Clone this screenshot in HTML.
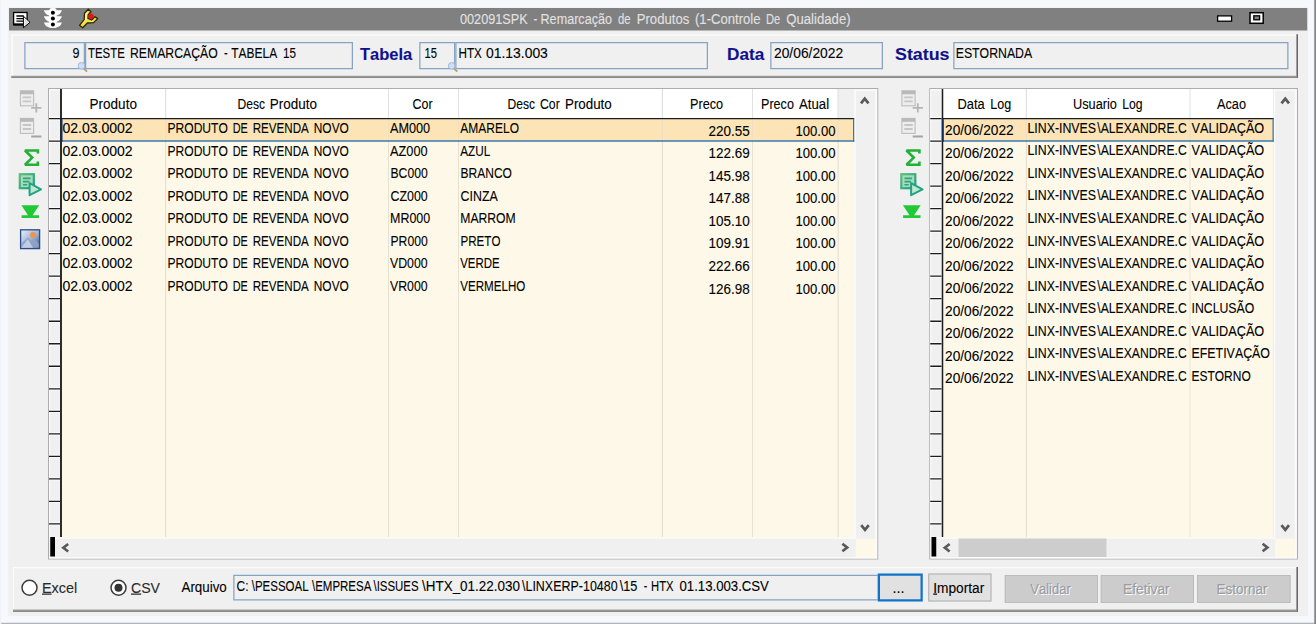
<!DOCTYPE html>
<html lang="pt-BR"><head><meta charset="utf-8"><title>002091SPK - Remarcação de Produtos</title>
<style>
html,body{margin:0;padding:0;width:1316px;height:624px;overflow:hidden;background:#f6f8fc}
#frame{position:absolute;left:0;top:0;width:5264px;height:2496px;transform:scale(.25);transform-origin:0 0;
 font-family:"Liberation Sans",sans-serif;background:#f6f8fc;overflow:hidden}
#frame div,#frame span,#frame svg,.grp{position:absolute;display:block;box-sizing:border-box}
.grp{left:0;top:0;width:0;height:0}
.t{white-space:pre;font-kerning:none;transform-origin:0 0;-webkit-text-stroke:.4px}
.ul1::first-letter{text-decoration:underline}
</style></head><body>
<div id="frame">
<div style="left:33px;top:30px;width:5199px;height:2434px;background:#f0f0f0"></div>
<div style="left:0px;top:2491px;width:5264px;height:5px;background:#b0b3b8"></div>
<div style="left:5257px;top:0px;width:7px;height:2496px;background:#838588"></div>
<div style="left:0px;top:0px;width:5px;height:2496px;background:#eff2f6"></div>
<header class="grp" id="titlebar">
<div class="titlebar" style="left:36px;top:32px;width:5193px;height:90px;background:#808080"></div>
<span class="t" style="left:1840.0px;top:42.6px;font-size:55.2px;line-height:66.2px;transform:scaleX(0.9180);color:#e2e2e2;">002091SPK</span>
<span class="t" style="left:2134.4px;top:42.6px;font-size:55.2px;line-height:66.2px;transform:scaleX(0.8216);color:#e2e2e2;">-</span>
<span class="t" style="left:2162.4px;top:42.6px;font-size:55.2px;line-height:66.2px;transform:scaleX(0.9143);color:#e2e2e2;">Remarcação</span>
<span class="t" style="left:2472.0px;top:42.6px;font-size:55.2px;line-height:66.2px;transform:scaleX(0.8195);color:#e2e2e2;">de</span>
<span class="t" style="left:2546.8px;top:42.6px;font-size:55.2px;line-height:66.2px;transform:scaleX(0.9510);color:#e2e2e2;">Produtos</span>
<span class="t" style="left:2779.6px;top:42.6px;font-size:55.2px;line-height:66.2px;transform:scaleX(0.9484);color:#e2e2e2;">(1-Controle</span>
<span class="t" style="left:3063.6px;top:42.6px;font-size:55.2px;line-height:66.2px;transform:scaleX(0.8085);color:#e2e2e2;">De</span>
<span class="t" style="left:3145.2px;top:42.6px;font-size:55.2px;line-height:66.2px;transform:scaleX(0.9532);color:#e2e2e2;">Qualidade)</span>
<svg class="ic" style="left:4856px;top:36px;width:224px;height:80px" viewBox="1214 9 56 20"><rect x="1217.6" y="15.9" width="14" height="5.3" fill="#fff" stroke="#000" stroke-width="1.3"/><rect x="1250" y="12.7" width="13.2" height="10.6" fill="#fff" stroke="#000" stroke-width="1.5"/><rect x="1253.8" y="15.8" width="5.8" height="4" fill="#808080" stroke="#000" stroke-width="1.3"/></svg>
<svg class="ic" style="left:36px;top:28px;width:384px;height:96px" viewBox="9 7 96 24"><rect x="13.6" y="12.5" width="13.5" height="12" fill="#fff" stroke="#000" stroke-width="1.3"/><rect x="13.2" y="23.4" width="12" height="2.2" fill="#000"/><path d="M16.4 16h7.4M16.4 18.6h7.4M16.4 21.2h7.4" stroke="#000" stroke-width="1.3"/><path d="M23.4 16.2 L30 22.3 L23.4 27.7 Z" fill="#fff" stroke="#000" stroke-width="1" stroke-linejoin="round"/><path d="M24.6 18.6 L28.6 22.3 L24.6 25.6 Z" fill="#dcdcdc"/><rect x="49.2" y="8.1" width="7.4" height="19.8" rx="2.6" fill="#fff"/><path d="M50 10.2H43.9Q45.2 14.8 50 15.8ZM50 16.3H43.9Q45.2 20.9 50 21.9ZM50 22.4H43.9Q45.4 27 51 27.9Z" fill="#fff"/><path d="M55.8 10.2H61.9Q60.6 14.8 55.8 15.8ZM55.8 16.3H61.9Q60.6 20.9 55.8 21.9ZM55.8 22.4H61.9Q60.4 27 54.8 27.9Z" fill="#fff"/><circle cx="52.9" cy="12.7" r="2" fill="#000"/><circle cx="52.9" cy="18.5" r="2" fill="#000"/><circle cx="52.9" cy="24.4" r="2" fill="#000"/><path d="M79.5 25.3 L84.2 19.6 L84.4 13.4 L88.3 9.3 L91 11.8 L88.2 14.8 L88 18.4 L91.5 20 L95 16.7 L97.7 18.6 L93.6 22.6 L87.4 23 L82.7 27.7 Z" fill="#f3df36" stroke="#2a2400" stroke-width="1.3" stroke-linejoin="round"/><path d="M85.6 14 L88 11.4 L86.8 15 L86.6 19.6 L82 24.6 L85.2 20 Z" fill="#fffbc4"/><path d="M88.6 20.4 L93 21.2 L95.2 18.8 L92 21.9 Z" fill="#fffbc4"/><circle cx="91" cy="16.3" r="2.7" fill="#e8141c"/></svg>
</header>
<section class="grp" id="cabecalho">
<div class="panel" style="left:45px;top:137px;width:5147px;height:174px;background:#f0f0f0"></div>
<div style="left:45px;top:137px;width:5147px;height:7px;background:#f9f9f9"></div>
<div style="left:45px;top:137px;width:7px;height:174px;background:#f9f9f9"></div>
<div style="left:45px;top:303px;width:5147px;height:3px;background:#a2a2a2"></div>
<div style="left:45px;top:306px;width:5147px;height:5px;background:#676767"></div>
<div style="left:5184px;top:137px;width:3px;height:174px;background:#a2a2a2"></div>
<div style="left:5187px;top:137px;width:5px;height:174px;background:#676767"></div>
<div class="field" style="left:97px;top:168px;width:243px;height:109px;background:#f0f0f0;border:5px solid #86a3c2"></div>
<div class="field" style="left:340px;top:168px;width:1072px;height:109px;background:#f0f0f0;border:5px solid #86a3c2"></div>
<div class="field" style="left:1677px;top:168px;width:144px;height:109px;background:#f0f0f0;border:5px solid #86a3c2"></div>
<div class="field" style="left:1821px;top:168px;width:1011px;height:109px;background:#f0f0f0;border:5px solid #86a3c2"></div>
<div class="field" style="left:3081px;top:168px;width:451px;height:109px;background:#f0f0f0;border:5px solid #86a3c2"></div>
<div class="field" style="left:3813px;top:168px;width:1341px;height:109px;background:#f0f0f0;border:5px solid #86a3c2"></div>
<span class="t" style="left:289.6px;top:179.4px;font-size:55.2px;line-height:66.2px;transform:scaleX(0.9106);color:#000;">9</span>
<span class="t" style="left:352.4px;top:179.4px;font-size:55.2px;line-height:66.2px;transform:scaleX(0.8292);color:#000;">TESTE</span>
<span class="t" style="left:520.0px;top:179.4px;font-size:55.2px;line-height:66.2px;transform:scaleX(0.8869);color:#000;">REMARCAÇÃO</span>
<span class="t" style="left:896.4px;top:179.4px;font-size:55.2px;line-height:66.2px;transform:scaleX(0.8000);color:#000;">-</span>
<span class="t" style="left:924.8px;top:179.4px;font-size:55.2px;line-height:66.2px;transform:scaleX(0.8684);color:#000;">TABELA</span>
<span class="t" style="left:1132.0px;top:179.4px;font-size:55.2px;line-height:66.2px;transform:scaleX(0.8455);color:#000;">15</span>
<span class="t" style="left:1698.4px;top:179.4px;font-size:55.2px;line-height:66.2px;transform:scaleX(0.8130);color:#000;">15</span>
<span class="t" style="left:1834.0px;top:179.4px;font-size:55.2px;line-height:66.2px;transform:scaleX(0.8471);color:#000;">HTX</span>
<span class="t" style="left:1944.4px;top:179.4px;font-size:55.2px;line-height:66.2px;transform:scaleX(1.0075);color:#000;">01.13.003</span>
<span class="t" style="left:3096.4px;top:179.4px;font-size:55.2px;line-height:66.2px;transform:scaleX(1.0011);color:#000;">20/06/2022</span>
<span class="t" style="left:3823.2px;top:179.4px;font-size:55.2px;line-height:66.2px;transform:scaleX(0.8893);color:#000;">ESTORNADA</span>
<span class="t" style="left:1440.4px;top:177.5px;font-size:65.2px;line-height:78.2px;transform:scaleX(1.0106);color:#10108c;font-weight:bold;">Tabela</span>
<span class="t" style="left:2907.6px;top:177.5px;font-size:65.2px;line-height:78.2px;transform:scaleX(1.0535);color:#10108c;font-weight:bold;">Data</span>
<span class="t" style="left:3579.6px;top:177.5px;font-size:65.2px;line-height:78.2px;transform:scaleX(1.0927);color:#10108c;font-weight:bold;">Status</span>
<svg class="ic" style="left:309px;top:245px;width:48px;height:48px" viewBox="0 0 12 12"><path d="M5.6 6.4 L9.8 10.4" stroke="#b8a070" stroke-width="2"/><circle cx="4.2" cy="4.6" r="3.3" fill="#cfe0f6" stroke="#9db8dc" stroke-width="1"/></svg>
<svg class="ic" style="left:1790px;top:245px;width:48px;height:48px" viewBox="0 0 12 12"><path d="M5.6 6.4 L9.8 10.4" stroke="#b8a070" stroke-width="2"/><circle cx="4.2" cy="4.6" r="3.3" fill="#cfe0f6" stroke="#9db8dc" stroke-width="1"/></svg>
</section>
<section class="grp" id="grid-produtos">
<div class="grid" style="left:192px;top:352px;width:3321px;height:1886px;background:#f0f0f0;border:4px solid #adadaf"></div>
<div style="left:248px;top:474px;width:3169px;height:1675px;background:#fef8e9"></div>
<div style="left:248px;top:356px;width:3105px;height:118px;background:#fff"></div>
<div style="left:248px;top:477px;width:3169px;height:86px;background:#fce4b6"></div>
<div style="left:660px;top:356px;width:5px;height:118px;background:#e2e2e2"></div>
<div style="left:660px;top:474px;width:5px;height:1675px;background:#e6e1d2"></div>
<div style="left:660px;top:477px;width:5px;height:86px;background:#f1dfc2"></div>
<div style="left:1552px;top:356px;width:4px;height:118px;background:#e2e2e2"></div>
<div style="left:1552px;top:474px;width:4px;height:1675px;background:#e6e1d2"></div>
<div style="left:1552px;top:477px;width:4px;height:86px;background:#f1dfc2"></div>
<div style="left:1832px;top:356px;width:4px;height:118px;background:#e2e2e2"></div>
<div style="left:1832px;top:474px;width:4px;height:1675px;background:#e6e1d2"></div>
<div style="left:1832px;top:477px;width:4px;height:86px;background:#f1dfc2"></div>
<div style="left:2647px;top:356px;width:5px;height:118px;background:#e2e2e2"></div>
<div style="left:2647px;top:474px;width:5px;height:1675px;background:#e6e1d2"></div>
<div style="left:2647px;top:477px;width:5px;height:86px;background:#f1dfc2"></div>
<div style="left:3008px;top:356px;width:4px;height:118px;background:#e2e2e2"></div>
<div style="left:3008px;top:474px;width:4px;height:1675px;background:#e6e1d2"></div>
<div style="left:3008px;top:477px;width:4px;height:86px;background:#f1dfc2"></div>
<div style="left:3350px;top:356px;width:5px;height:118px;background:#e2e2e2"></div>
<div style="left:3350px;top:474px;width:5px;height:1675px;background:#e6e1d2"></div>
<div style="left:3350px;top:477px;width:5px;height:86px;background:#f1dfc2"></div>
<div style="left:3417px;top:356px;width:92px;height:1793px;background:#f0f0f0"></div>
<div style="left:3417px;top:357px;width:6px;height:1792px;background:#fbfbfb"></div>
<div style="left:3500px;top:357px;width:8px;height:1876px;background:#fafafa"></div>
<div style="left:3417px;top:358px;width:91px;height:6px;background:#fafafa"></div>
<div style="left:196px;top:356px;width:45px;height:1793px;background:#f0f0f0"></div>
<div style="left:196px;top:356px;width:5px;height:1793px;background:#fafafa"></div>
<div style="left:196px;top:356px;width:45px;height:6px;background:#fafafa"></div>
<div style="left:196px;top:467px;width:44px;height:14px;background:#fafafa"></div>
<div style="left:196px;top:472px;width:45px;height:5px;background:#1c1c1c"></div>
<div style="left:196px;top:557px;width:44px;height:14px;background:#fafafa"></div>
<div style="left:196px;top:562px;width:45px;height:5px;background:#1c1c1c"></div>
<div style="left:196px;top:648px;width:44px;height:13px;background:#fafafa"></div>
<div style="left:196px;top:652px;width:45px;height:5px;background:#1c1c1c"></div>
<div style="left:196px;top:738px;width:44px;height:13px;background:#fafafa"></div>
<div style="left:196px;top:742px;width:45px;height:5px;background:#1c1c1c"></div>
<div style="left:196px;top:828px;width:44px;height:13px;background:#fafafa"></div>
<div style="left:196px;top:832px;width:45px;height:5px;background:#1c1c1c"></div>
<div style="left:196px;top:918px;width:44px;height:13px;background:#fafafa"></div>
<div style="left:196px;top:922px;width:45px;height:5px;background:#1c1c1c"></div>
<div style="left:196px;top:1008px;width:44px;height:13px;background:#fafafa"></div>
<div style="left:196px;top:1012px;width:45px;height:5px;background:#1c1c1c"></div>
<div style="left:196px;top:1098px;width:44px;height:14px;background:#fafafa"></div>
<div style="left:196px;top:1102px;width:45px;height:5px;background:#1c1c1c"></div>
<div style="left:196px;top:1188px;width:44px;height:14px;background:#fafafa"></div>
<div style="left:196px;top:1192px;width:45px;height:5px;background:#1c1c1c"></div>
<div style="left:196px;top:1278px;width:44px;height:14px;background:#fafafa"></div>
<div style="left:196px;top:1282px;width:45px;height:6px;background:#1c1c1c"></div>
<div style="left:196px;top:1368px;width:44px;height:14px;background:#fafafa"></div>
<div style="left:196px;top:1372px;width:45px;height:6px;background:#1c1c1c"></div>
<div style="left:196px;top:1458px;width:44px;height:14px;background:#fafafa"></div>
<div style="left:196px;top:1462px;width:45px;height:6px;background:#1c1c1c"></div>
<div style="left:196px;top:1548px;width:44px;height:14px;background:#fafafa"></div>
<div style="left:196px;top:1553px;width:45px;height:5px;background:#1c1c1c"></div>
<div style="left:196px;top:1638px;width:44px;height:14px;background:#fafafa"></div>
<div style="left:196px;top:1643px;width:45px;height:5px;background:#1c1c1c"></div>
<div style="left:196px;top:1729px;width:44px;height:13px;background:#fafafa"></div>
<div style="left:196px;top:1733px;width:45px;height:5px;background:#1c1c1c"></div>
<div style="left:196px;top:1819px;width:44px;height:13px;background:#fafafa"></div>
<div style="left:196px;top:1823px;width:45px;height:5px;background:#1c1c1c"></div>
<div style="left:196px;top:1909px;width:44px;height:13px;background:#fafafa"></div>
<div style="left:196px;top:1913px;width:45px;height:5px;background:#1c1c1c"></div>
<div style="left:196px;top:1999px;width:44px;height:13px;background:#fafafa"></div>
<div style="left:196px;top:2003px;width:45px;height:5px;background:#1c1c1c"></div>
<div style="left:196px;top:2089px;width:44px;height:13px;background:#fafafa"></div>
<div style="left:196px;top:2093px;width:45px;height:5px;background:#1c1c1c"></div>
<div style="left:240px;top:356px;width:8px;height:1793px;background:#2e2d2a"></div>
<div style="left:240px;top:472px;width:3177px;height:5px;background:#1c1c1c"></div>
<div style="left:246px;top:561px;width:3171px;height:6px;background:#3a78a8"></div>
<div style="left:3412px;top:474px;width:5px;height:93px;background:#3a78a8"></div>
<div style="left:242px;top:477px;width:8px;height:90px;background:#0c2c5e"></div>
<div style="left:196px;top:2149px;width:3313px;height:85px;background:#f0f0f0"></div>
<div style="left:3423px;top:2155px;width:77px;height:73px;background:#fef8e9"></div>
<div style="left:196px;top:2149px;width:3227px;height:6px;background:#fbfbfb"></div>
<div style="left:196px;top:2228px;width:3312px;height:5px;background:#fafafa"></div>
<div style="left:3500px;top:2149px;width:8px;height:84px;background:#fafafa"></div>
<div style="left:201px;top:2148px;width:19px;height:78px;background:#000"></div>
<svg class="ic" style="left:3435px;top:380px;width:48px;height:48px" viewBox="-6 -6 12 12"><path d="M-3.75 2.4 L0 -2.4 L3.75 2.4" fill="none" stroke="#5a5a5a" stroke-width="2.7"/></svg>
<svg class="ic" style="left:3436px;top:2086px;width:48px;height:48px" viewBox="-6 -6 12 12"><path d="M-3.75 -2.4 L0 2.4 L3.75 -2.4" fill="none" stroke="#5a5a5a" stroke-width="2.7"/></svg>
<svg class="ic" style="left:239px;top:2167px;width:48px;height:48px" viewBox="-6 -6 12 12"><path d="M2.4 -3.75 L-2.4 0 L2.4 3.75" fill="none" stroke="#5a5a5a" stroke-width="2.7"/></svg>
<svg class="ic" style="left:3355px;top:2166px;width:48px;height:48px" viewBox="-6 -6 12 12"><path d="M-2.4 -3.75 L2.4 0 L-2.4 3.75" fill="none" stroke="#5a5a5a" stroke-width="2.7"/></svg>
<span class="t" style="left:358.0px;top:383.0px;font-size:55.2px;line-height:66.2px;transform:scaleX(0.9819);color:#000;">Produto</span>
<span class="t" style="left:950.4px;top:383.0px;font-size:55.2px;line-height:66.2px;transform:scaleX(0.8762);color:#000;">Desc</span>
<span class="t" style="left:1079.2px;top:383.0px;font-size:55.2px;line-height:66.2px;transform:scaleX(0.9757);color:#000;">Produto</span>
<span class="t" style="left:1650.4px;top:383.0px;font-size:55.2px;line-height:66.2px;transform:scaleX(0.9034);color:#000;">Cor</span>
<span class="t" style="left:2030.0px;top:383.0px;font-size:55.2px;line-height:66.2px;transform:scaleX(0.8762);color:#000;">Desc</span>
<span class="t" style="left:2160.4px;top:383.0px;font-size:55.2px;line-height:66.2px;transform:scaleX(0.8899);color:#000;">Cor</span>
<span class="t" style="left:2259.6px;top:383.0px;font-size:55.2px;line-height:66.2px;transform:scaleX(0.9674);color:#000;">Produto</span>
<span class="t" style="left:2760.0px;top:383.0px;font-size:55.2px;line-height:66.2px;transform:scaleX(0.9179);color:#000;">Preco</span>
<span class="t" style="left:3044.4px;top:383.0px;font-size:55.2px;line-height:66.2px;transform:scaleX(0.9123);color:#000;">Preco</span>
<span class="t" style="left:3196.4px;top:383.0px;font-size:55.2px;line-height:66.2px;transform:scaleX(0.9587);color:#000;">Atual</span>
<span class="t" style="left:249.6px;top:479.8px;font-size:55.2px;line-height:66.2px;transform:scaleX(1.0141);color:#000;">02.03.0002</span>
<span class="t" style="left:670.0px;top:479.8px;font-size:55.2px;line-height:66.2px;transform:scaleX(0.8748);color:#000;">PRODUTO</span>
<span class="t" style="left:930.8px;top:479.8px;font-size:55.2px;line-height:66.2px;transform:scaleX(0.7870);color:#000;">DE</span>
<span class="t" style="left:1011.2px;top:479.8px;font-size:55.2px;line-height:66.2px;transform:scaleX(0.8390);color:#000;">REVENDA</span>
<span class="t" style="left:1255.2px;top:479.8px;font-size:55.2px;line-height:66.2px;transform:scaleX(0.8651);color:#000;">NOVO</span>
<span class="t" style="left:1560.0px;top:479.8px;font-size:55.2px;line-height:66.2px;transform:scaleX(0.9189);color:#000;">AM000</span>
<span class="t" style="left:1841.2px;top:479.8px;font-size:55.2px;line-height:66.2px;transform:scaleX(0.8703);color:#000;">AMARELO</span>
<span class="t" style="left:2834.0px;top:490.6px;font-size:55.2px;line-height:66.2px;transform:scaleX(0.9775);color:#000;">220.55</span>
<span class="t" style="left:3182.0px;top:490.6px;font-size:55.2px;line-height:66.2px;transform:scaleX(0.9491);color:#000;">100.00</span>
<span class="t" style="left:249.6px;top:569.9px;font-size:55.2px;line-height:66.2px;transform:scaleX(1.0141);color:#000;">02.03.0002</span>
<span class="t" style="left:670.0px;top:569.9px;font-size:55.2px;line-height:66.2px;transform:scaleX(0.8748);color:#000;">PRODUTO</span>
<span class="t" style="left:930.8px;top:569.9px;font-size:55.2px;line-height:66.2px;transform:scaleX(0.7870);color:#000;">DE</span>
<span class="t" style="left:1011.2px;top:569.9px;font-size:55.2px;line-height:66.2px;transform:scaleX(0.8390);color:#000;">REVENDA</span>
<span class="t" style="left:1255.2px;top:569.9px;font-size:55.2px;line-height:66.2px;transform:scaleX(0.8651);color:#000;">NOVO</span>
<span class="t" style="left:1560.0px;top:569.9px;font-size:55.2px;line-height:66.2px;transform:scaleX(0.9266);color:#000;">AZ000</span>
<span class="t" style="left:1841.2px;top:569.9px;font-size:55.2px;line-height:66.2px;transform:scaleX(0.8524);color:#000;">AZUL</span>
<span class="t" style="left:2834.0px;top:580.7px;font-size:55.2px;line-height:66.2px;transform:scaleX(0.9775);color:#000;">122.69</span>
<span class="t" style="left:3182.0px;top:580.7px;font-size:55.2px;line-height:66.2px;transform:scaleX(0.9491);color:#000;">100.00</span>
<span class="t" style="left:249.6px;top:660.1px;font-size:55.2px;line-height:66.2px;transform:scaleX(1.0141);color:#000;">02.03.0002</span>
<span class="t" style="left:670.0px;top:660.1px;font-size:55.2px;line-height:66.2px;transform:scaleX(0.8748);color:#000;">PRODUTO</span>
<span class="t" style="left:930.8px;top:660.1px;font-size:55.2px;line-height:66.2px;transform:scaleX(0.7870);color:#000;">DE</span>
<span class="t" style="left:1011.2px;top:660.1px;font-size:55.2px;line-height:66.2px;transform:scaleX(0.8390);color:#000;">REVENDA</span>
<span class="t" style="left:1255.2px;top:660.1px;font-size:55.2px;line-height:66.2px;transform:scaleX(0.8651);color:#000;">NOVO</span>
<span class="t" style="left:1561.6px;top:660.1px;font-size:55.2px;line-height:66.2px;transform:scaleX(0.8828);color:#000;">BC000</span>
<span class="t" style="left:1842.4px;top:660.1px;font-size:55.2px;line-height:66.2px;transform:scaleX(0.8710);color:#000;">BRANCO</span>
<span class="t" style="left:2834.0px;top:670.9px;font-size:55.2px;line-height:66.2px;transform:scaleX(0.9775);color:#000;">145.98</span>
<span class="t" style="left:3182.0px;top:670.9px;font-size:55.2px;line-height:66.2px;transform:scaleX(0.9491);color:#000;">100.00</span>
<span class="t" style="left:249.6px;top:750.2px;font-size:55.2px;line-height:66.2px;transform:scaleX(1.0141);color:#000;">02.03.0002</span>
<span class="t" style="left:670.0px;top:750.2px;font-size:55.2px;line-height:66.2px;transform:scaleX(0.8748);color:#000;">PRODUTO</span>
<span class="t" style="left:930.8px;top:750.2px;font-size:55.2px;line-height:66.2px;transform:scaleX(0.7870);color:#000;">DE</span>
<span class="t" style="left:1011.2px;top:750.2px;font-size:55.2px;line-height:66.2px;transform:scaleX(0.8390);color:#000;">REVENDA</span>
<span class="t" style="left:1255.2px;top:750.2px;font-size:55.2px;line-height:66.2px;transform:scaleX(0.8651);color:#000;">NOVO</span>
<span class="t" style="left:1561.6px;top:750.2px;font-size:55.2px;line-height:66.2px;transform:scaleX(0.9002);color:#000;">CZ000</span>
<span class="t" style="left:1842.4px;top:750.2px;font-size:55.2px;line-height:66.2px;transform:scaleX(0.9002);color:#000;">CINZA</span>
<span class="t" style="left:2834.0px;top:761.0px;font-size:55.2px;line-height:66.2px;transform:scaleX(0.9775);color:#000;">147.88</span>
<span class="t" style="left:3182.0px;top:761.0px;font-size:55.2px;line-height:66.2px;transform:scaleX(0.9491);color:#000;">100.00</span>
<span class="t" style="left:249.6px;top:840.4px;font-size:55.2px;line-height:66.2px;transform:scaleX(1.0141);color:#000;">02.03.0002</span>
<span class="t" style="left:670.0px;top:840.4px;font-size:55.2px;line-height:66.2px;transform:scaleX(0.8748);color:#000;">PRODUTO</span>
<span class="t" style="left:930.8px;top:840.4px;font-size:55.2px;line-height:66.2px;transform:scaleX(0.7870);color:#000;">DE</span>
<span class="t" style="left:1011.2px;top:840.4px;font-size:55.2px;line-height:66.2px;transform:scaleX(0.8390);color:#000;">REVENDA</span>
<span class="t" style="left:1255.2px;top:840.4px;font-size:55.2px;line-height:66.2px;transform:scaleX(0.8651);color:#000;">NOVO</span>
<span class="t" style="left:1560.0px;top:840.4px;font-size:55.2px;line-height:66.2px;transform:scaleX(0.9034);color:#000;">MR000</span>
<span class="t" style="left:1841.2px;top:840.4px;font-size:55.2px;line-height:66.2px;transform:scaleX(0.8818);color:#000;">MARROM</span>
<span class="t" style="left:2834.0px;top:851.2px;font-size:55.2px;line-height:66.2px;transform:scaleX(0.9775);color:#000;">105.10</span>
<span class="t" style="left:3182.0px;top:851.2px;font-size:55.2px;line-height:66.2px;transform:scaleX(0.9491);color:#000;">100.00</span>
<span class="t" style="left:249.6px;top:930.6px;font-size:55.2px;line-height:66.2px;transform:scaleX(1.0141);color:#000;">02.03.0002</span>
<span class="t" style="left:670.0px;top:930.6px;font-size:55.2px;line-height:66.2px;transform:scaleX(0.8748);color:#000;">PRODUTO</span>
<span class="t" style="left:930.8px;top:930.6px;font-size:55.2px;line-height:66.2px;transform:scaleX(0.7870);color:#000;">DE</span>
<span class="t" style="left:1011.2px;top:930.6px;font-size:55.2px;line-height:66.2px;transform:scaleX(0.8390);color:#000;">REVENDA</span>
<span class="t" style="left:1255.2px;top:930.6px;font-size:55.2px;line-height:66.2px;transform:scaleX(0.8651);color:#000;">NOVO</span>
<span class="t" style="left:1561.6px;top:930.6px;font-size:55.2px;line-height:66.2px;transform:scaleX(0.8828);color:#000;">PR000</span>
<span class="t" style="left:1842.4px;top:930.6px;font-size:55.2px;line-height:66.2px;transform:scaleX(0.8412);color:#000;">PRETO</span>
<span class="t" style="left:2834.0px;top:941.4px;font-size:55.2px;line-height:66.2px;transform:scaleX(0.9775);color:#000;">109.91</span>
<span class="t" style="left:3182.0px;top:941.4px;font-size:55.2px;line-height:66.2px;transform:scaleX(0.9491);color:#000;">100.00</span>
<span class="t" style="left:249.6px;top:1020.7px;font-size:55.2px;line-height:66.2px;transform:scaleX(1.0141);color:#000;">02.03.0002</span>
<span class="t" style="left:670.0px;top:1020.7px;font-size:55.2px;line-height:66.2px;transform:scaleX(0.8748);color:#000;">PRODUTO</span>
<span class="t" style="left:930.8px;top:1020.7px;font-size:55.2px;line-height:66.2px;transform:scaleX(0.7870);color:#000;">DE</span>
<span class="t" style="left:1011.2px;top:1020.7px;font-size:55.2px;line-height:66.2px;transform:scaleX(0.8390);color:#000;">REVENDA</span>
<span class="t" style="left:1255.2px;top:1020.7px;font-size:55.2px;line-height:66.2px;transform:scaleX(0.8651);color:#000;">NOVO</span>
<span class="t" style="left:1560.0px;top:1020.7px;font-size:55.2px;line-height:66.2px;transform:scaleX(0.8923);color:#000;">VD000</span>
<span class="t" style="left:1841.2px;top:1020.7px;font-size:55.2px;line-height:66.2px;transform:scaleX(0.8263);color:#000;">VERDE</span>
<span class="t" style="left:2834.0px;top:1031.5px;font-size:55.2px;line-height:66.2px;transform:scaleX(0.9775);color:#000;">222.66</span>
<span class="t" style="left:3182.0px;top:1031.5px;font-size:55.2px;line-height:66.2px;transform:scaleX(0.9491);color:#000;">100.00</span>
<span class="t" style="left:249.6px;top:1110.9px;font-size:55.2px;line-height:66.2px;transform:scaleX(1.0141);color:#000;">02.03.0002</span>
<span class="t" style="left:670.0px;top:1110.9px;font-size:55.2px;line-height:66.2px;transform:scaleX(0.8748);color:#000;">PRODUTO</span>
<span class="t" style="left:930.8px;top:1110.9px;font-size:55.2px;line-height:66.2px;transform:scaleX(0.7870);color:#000;">DE</span>
<span class="t" style="left:1011.2px;top:1110.9px;font-size:55.2px;line-height:66.2px;transform:scaleX(0.8390);color:#000;">REVENDA</span>
<span class="t" style="left:1255.2px;top:1110.9px;font-size:55.2px;line-height:66.2px;transform:scaleX(0.8651);color:#000;">NOVO</span>
<span class="t" style="left:1560.0px;top:1110.9px;font-size:55.2px;line-height:66.2px;transform:scaleX(0.8923);color:#000;">VR000</span>
<span class="t" style="left:1841.2px;top:1110.9px;font-size:55.2px;line-height:66.2px;transform:scaleX(0.8413);color:#000;">VERMELHO</span>
<span class="t" style="left:2834.0px;top:1121.7px;font-size:55.2px;line-height:66.2px;transform:scaleX(0.9775);color:#000;">126.98</span>
<span class="t" style="left:3182.0px;top:1121.7px;font-size:55.2px;line-height:66.2px;transform:scaleX(0.9491);color:#000;">100.00</span>
</section>
<section class="grp" id="grid-log">
<div class="grid" style="left:3717px;top:352px;width:1475px;height:1886px;background:#f0f0f0;border:4px solid #adadaf"></div>
<div style="left:3773px;top:474px;width:1322px;height:1675px;background:#fef8e9"></div>
<div style="left:3773px;top:356px;width:1322px;height:118px;background:#fff"></div>
<div style="left:3773px;top:477px;width:1322px;height:86px;background:#fce4b6"></div>
<div style="left:4103px;top:356px;width:5px;height:118px;background:#e2e2e2"></div>
<div style="left:4103px;top:474px;width:5px;height:1675px;background:#e6e1d2"></div>
<div style="left:4103px;top:477px;width:5px;height:86px;background:#f1dfc2"></div>
<div style="left:4758px;top:356px;width:4px;height:118px;background:#e2e2e2"></div>
<div style="left:4758px;top:474px;width:4px;height:1675px;background:#e6e1d2"></div>
<div style="left:4758px;top:477px;width:4px;height:86px;background:#f1dfc2"></div>
<div style="left:5093px;top:356px;width:5px;height:118px;background:#e2e2e2"></div>
<div style="left:5093px;top:474px;width:5px;height:1675px;background:#e6e1d2"></div>
<div style="left:5093px;top:477px;width:5px;height:86px;background:#f1dfc2"></div>
<div style="left:5095px;top:356px;width:93px;height:1793px;background:#f0f0f0"></div>
<div style="left:5095px;top:357px;width:6px;height:1792px;background:#fbfbfb"></div>
<div style="left:5179px;top:357px;width:8px;height:1876px;background:#fafafa"></div>
<div style="left:5095px;top:358px;width:92px;height:6px;background:#fafafa"></div>
<div style="left:3721px;top:356px;width:45px;height:1793px;background:#f0f0f0"></div>
<div style="left:3721px;top:356px;width:5px;height:1793px;background:#fafafa"></div>
<div style="left:3721px;top:356px;width:45px;height:6px;background:#fafafa"></div>
<div style="left:3721px;top:467px;width:45px;height:14px;background:#fafafa"></div>
<div style="left:3721px;top:472px;width:45px;height:5px;background:#1c1c1c"></div>
<div style="left:3721px;top:557px;width:45px;height:14px;background:#fafafa"></div>
<div style="left:3721px;top:562px;width:45px;height:5px;background:#1c1c1c"></div>
<div style="left:3721px;top:648px;width:45px;height:13px;background:#fafafa"></div>
<div style="left:3721px;top:652px;width:45px;height:5px;background:#1c1c1c"></div>
<div style="left:3721px;top:738px;width:45px;height:13px;background:#fafafa"></div>
<div style="left:3721px;top:742px;width:45px;height:5px;background:#1c1c1c"></div>
<div style="left:3721px;top:828px;width:45px;height:13px;background:#fafafa"></div>
<div style="left:3721px;top:832px;width:45px;height:5px;background:#1c1c1c"></div>
<div style="left:3721px;top:918px;width:45px;height:13px;background:#fafafa"></div>
<div style="left:3721px;top:922px;width:45px;height:5px;background:#1c1c1c"></div>
<div style="left:3721px;top:1008px;width:45px;height:13px;background:#fafafa"></div>
<div style="left:3721px;top:1012px;width:45px;height:5px;background:#1c1c1c"></div>
<div style="left:3721px;top:1098px;width:45px;height:14px;background:#fafafa"></div>
<div style="left:3721px;top:1102px;width:45px;height:5px;background:#1c1c1c"></div>
<div style="left:3721px;top:1188px;width:45px;height:14px;background:#fafafa"></div>
<div style="left:3721px;top:1192px;width:45px;height:5px;background:#1c1c1c"></div>
<div style="left:3721px;top:1278px;width:45px;height:14px;background:#fafafa"></div>
<div style="left:3721px;top:1282px;width:45px;height:6px;background:#1c1c1c"></div>
<div style="left:3721px;top:1368px;width:45px;height:14px;background:#fafafa"></div>
<div style="left:3721px;top:1372px;width:45px;height:6px;background:#1c1c1c"></div>
<div style="left:3721px;top:1458px;width:45px;height:14px;background:#fafafa"></div>
<div style="left:3721px;top:1462px;width:45px;height:6px;background:#1c1c1c"></div>
<div style="left:3721px;top:1548px;width:45px;height:14px;background:#fafafa"></div>
<div style="left:3721px;top:1553px;width:45px;height:5px;background:#1c1c1c"></div>
<div style="left:3721px;top:1638px;width:45px;height:14px;background:#fafafa"></div>
<div style="left:3721px;top:1643px;width:45px;height:5px;background:#1c1c1c"></div>
<div style="left:3721px;top:1729px;width:45px;height:13px;background:#fafafa"></div>
<div style="left:3721px;top:1733px;width:45px;height:5px;background:#1c1c1c"></div>
<div style="left:3721px;top:1819px;width:45px;height:13px;background:#fafafa"></div>
<div style="left:3721px;top:1823px;width:45px;height:5px;background:#1c1c1c"></div>
<div style="left:3721px;top:1909px;width:45px;height:13px;background:#fafafa"></div>
<div style="left:3721px;top:1913px;width:45px;height:5px;background:#1c1c1c"></div>
<div style="left:3721px;top:1999px;width:45px;height:13px;background:#fafafa"></div>
<div style="left:3721px;top:2003px;width:45px;height:5px;background:#1c1c1c"></div>
<div style="left:3721px;top:2089px;width:45px;height:13px;background:#fafafa"></div>
<div style="left:3721px;top:2093px;width:45px;height:5px;background:#1c1c1c"></div>
<div style="left:3767px;top:356px;width:6px;height:1793px;background:#1c1c1c"></div>
<div style="left:3767px;top:472px;width:1328px;height:5px;background:#1c1c1c"></div>
<div style="left:3771px;top:561px;width:1324px;height:6px;background:#3a78a8"></div>
<div style="left:5090px;top:474px;width:5px;height:93px;background:#3a78a8"></div>
<div style="left:3767px;top:477px;width:8px;height:90px;background:#0c2c5e"></div>
<div style="left:3721px;top:2149px;width:1467px;height:85px;background:#f0f0f0"></div>
<div style="left:5101px;top:2155px;width:78px;height:73px;background:#fef8e9"></div>
<div style="left:3721px;top:2149px;width:1380px;height:6px;background:#fbfbfb"></div>
<div style="left:3721px;top:2228px;width:1466px;height:5px;background:#fafafa"></div>
<div style="left:5179px;top:2149px;width:8px;height:84px;background:#fafafa"></div>
<div style="left:3726px;top:2148px;width:19px;height:78px;background:#000"></div>
<div style="left:3834px;top:2154px;width:592px;height:74px;background:#cdcdcd"></div>
<svg class="ic" style="left:5117px;top:380px;width:48px;height:48px" viewBox="-6 -6 12 12"><path d="M-3.75 2.4 L0 -2.4 L3.75 2.4" fill="none" stroke="#5a5a5a" stroke-width="2.7"/></svg>
<svg class="ic" style="left:5117px;top:2086px;width:48px;height:48px" viewBox="-6 -6 12 12"><path d="M-3.75 -2.4 L0 2.4 L3.75 -2.4" fill="none" stroke="#5a5a5a" stroke-width="2.7"/></svg>
<svg class="ic" style="left:3765px;top:2167px;width:48px;height:48px" viewBox="-6 -6 12 12"><path d="M2.4 -3.75 L-2.4 0 L2.4 3.75" fill="none" stroke="#5a5a5a" stroke-width="2.7"/></svg>
<svg class="ic" style="left:5036px;top:2166px;width:48px;height:48px" viewBox="-6 -6 12 12"><path d="M-2.4 -3.75 L2.4 0 L-2.4 3.75" fill="none" stroke="#5a5a5a" stroke-width="2.7"/></svg>
<span class="t" style="left:3830.4px;top:383.0px;font-size:55.2px;line-height:66.2px;transform:scaleX(0.9319);color:#000;">Data</span>
<span class="t" style="left:3960.8px;top:383.0px;font-size:55.2px;line-height:66.2px;transform:scaleX(0.9062);color:#000;">Log</span>
<span class="t" style="left:4291.6px;top:383.0px;font-size:55.2px;line-height:66.2px;transform:scaleX(0.9239);color:#000;">Usuario</span>
<span class="t" style="left:4489.2px;top:383.0px;font-size:55.2px;line-height:66.2px;transform:scaleX(0.8846);color:#000;">Log</span>
<span class="t" style="left:4867.6px;top:383.0px;font-size:55.2px;line-height:66.2px;transform:scaleX(0.9238);color:#000;">Acao</span>
<span class="t" style="left:3780.4px;top:489.4px;font-size:55.2px;line-height:66.2px;transform:scaleX(0.9939);color:#000;">20/06/2022</span>
<span class="t" style="left:4110.0px;top:479.0px;font-size:55.2px;line-height:66.2px;transform:scaleX(0.8938);color:#000;">LINX-INVES</span>
<span class="t" style="left:4389.2px;top:479.0px;font-size:55.2px;line-height:66.2px;transform:scaleX(0.8844);color:#000;">\ALEXANDRE.C</span>
<span class="t" style="left:4765.6px;top:479.0px;font-size:55.2px;line-height:66.2px;transform:scaleX(0.9211);color:#000;">VALIDAÇÃO</span>
<span class="t" style="left:3780.4px;top:579.5px;font-size:55.2px;line-height:66.2px;transform:scaleX(0.9939);color:#000;">20/06/2022</span>
<span class="t" style="left:4110.0px;top:569.1px;font-size:55.2px;line-height:66.2px;transform:scaleX(0.8938);color:#000;">LINX-INVES</span>
<span class="t" style="left:4389.2px;top:569.1px;font-size:55.2px;line-height:66.2px;transform:scaleX(0.8844);color:#000;">\ALEXANDRE.C</span>
<span class="t" style="left:4765.6px;top:569.1px;font-size:55.2px;line-height:66.2px;transform:scaleX(0.9211);color:#000;">VALIDAÇÃO</span>
<span class="t" style="left:3780.4px;top:669.7px;font-size:55.2px;line-height:66.2px;transform:scaleX(0.9939);color:#000;">20/06/2022</span>
<span class="t" style="left:4110.0px;top:659.3px;font-size:55.2px;line-height:66.2px;transform:scaleX(0.8938);color:#000;">LINX-INVES</span>
<span class="t" style="left:4389.2px;top:659.3px;font-size:55.2px;line-height:66.2px;transform:scaleX(0.8844);color:#000;">\ALEXANDRE.C</span>
<span class="t" style="left:4765.6px;top:659.3px;font-size:55.2px;line-height:66.2px;transform:scaleX(0.9211);color:#000;">VALIDAÇÃO</span>
<span class="t" style="left:3780.4px;top:759.8px;font-size:55.2px;line-height:66.2px;transform:scaleX(0.9939);color:#000;">20/06/2022</span>
<span class="t" style="left:4110.0px;top:749.4px;font-size:55.2px;line-height:66.2px;transform:scaleX(0.8938);color:#000;">LINX-INVES</span>
<span class="t" style="left:4389.2px;top:749.4px;font-size:55.2px;line-height:66.2px;transform:scaleX(0.8844);color:#000;">\ALEXANDRE.C</span>
<span class="t" style="left:4765.6px;top:749.4px;font-size:55.2px;line-height:66.2px;transform:scaleX(0.9211);color:#000;">VALIDAÇÃO</span>
<span class="t" style="left:3780.4px;top:850.0px;font-size:55.2px;line-height:66.2px;transform:scaleX(0.9939);color:#000;">20/06/2022</span>
<span class="t" style="left:4110.0px;top:839.6px;font-size:55.2px;line-height:66.2px;transform:scaleX(0.8938);color:#000;">LINX-INVES</span>
<span class="t" style="left:4389.2px;top:839.6px;font-size:55.2px;line-height:66.2px;transform:scaleX(0.8844);color:#000;">\ALEXANDRE.C</span>
<span class="t" style="left:4765.6px;top:839.6px;font-size:55.2px;line-height:66.2px;transform:scaleX(0.9211);color:#000;">VALIDAÇÃO</span>
<span class="t" style="left:3780.4px;top:940.2px;font-size:55.2px;line-height:66.2px;transform:scaleX(0.9939);color:#000;">20/06/2022</span>
<span class="t" style="left:4110.0px;top:929.8px;font-size:55.2px;line-height:66.2px;transform:scaleX(0.8938);color:#000;">LINX-INVES</span>
<span class="t" style="left:4389.2px;top:929.8px;font-size:55.2px;line-height:66.2px;transform:scaleX(0.8844);color:#000;">\ALEXANDRE.C</span>
<span class="t" style="left:4765.6px;top:929.8px;font-size:55.2px;line-height:66.2px;transform:scaleX(0.9211);color:#000;">VALIDAÇÃO</span>
<span class="t" style="left:3780.4px;top:1030.3px;font-size:55.2px;line-height:66.2px;transform:scaleX(0.9939);color:#000;">20/06/2022</span>
<span class="t" style="left:4110.0px;top:1019.9px;font-size:55.2px;line-height:66.2px;transform:scaleX(0.8938);color:#000;">LINX-INVES</span>
<span class="t" style="left:4389.2px;top:1019.9px;font-size:55.2px;line-height:66.2px;transform:scaleX(0.8844);color:#000;">\ALEXANDRE.C</span>
<span class="t" style="left:4765.6px;top:1019.9px;font-size:55.2px;line-height:66.2px;transform:scaleX(0.9211);color:#000;">VALIDAÇÃO</span>
<span class="t" style="left:3780.4px;top:1120.5px;font-size:55.2px;line-height:66.2px;transform:scaleX(0.9939);color:#000;">20/06/2022</span>
<span class="t" style="left:4110.0px;top:1110.1px;font-size:55.2px;line-height:66.2px;transform:scaleX(0.8938);color:#000;">LINX-INVES</span>
<span class="t" style="left:4389.2px;top:1110.1px;font-size:55.2px;line-height:66.2px;transform:scaleX(0.8844);color:#000;">\ALEXANDRE.C</span>
<span class="t" style="left:4765.6px;top:1110.1px;font-size:55.2px;line-height:66.2px;transform:scaleX(0.9211);color:#000;">VALIDAÇÃO</span>
<span class="t" style="left:3780.4px;top:1210.6px;font-size:55.2px;line-height:66.2px;transform:scaleX(0.9939);color:#000;">20/06/2022</span>
<span class="t" style="left:4110.0px;top:1200.2px;font-size:55.2px;line-height:66.2px;transform:scaleX(0.8938);color:#000;">LINX-INVES</span>
<span class="t" style="left:4389.2px;top:1200.2px;font-size:55.2px;line-height:66.2px;transform:scaleX(0.8844);color:#000;">\ALEXANDRE.C</span>
<span class="t" style="left:4766.4px;top:1200.2px;font-size:55.2px;line-height:66.2px;transform:scaleX(0.8892);color:#000;">INCLUSÃO</span>
<span class="t" style="left:3780.4px;top:1300.8px;font-size:55.2px;line-height:66.2px;transform:scaleX(0.9939);color:#000;">20/06/2022</span>
<span class="t" style="left:4110.0px;top:1290.4px;font-size:55.2px;line-height:66.2px;transform:scaleX(0.8938);color:#000;">LINX-INVES</span>
<span class="t" style="left:4389.2px;top:1290.4px;font-size:55.2px;line-height:66.2px;transform:scaleX(0.8844);color:#000;">\ALEXANDRE.C</span>
<span class="t" style="left:4765.6px;top:1290.4px;font-size:55.2px;line-height:66.2px;transform:scaleX(0.9211);color:#000;">VALIDAÇÃO</span>
<span class="t" style="left:3780.4px;top:1391.0px;font-size:55.2px;line-height:66.2px;transform:scaleX(0.9939);color:#000;">20/06/2022</span>
<span class="t" style="left:4110.0px;top:1380.6px;font-size:55.2px;line-height:66.2px;transform:scaleX(0.8938);color:#000;">LINX-INVES</span>
<span class="t" style="left:4389.2px;top:1380.6px;font-size:55.2px;line-height:66.2px;transform:scaleX(0.8844);color:#000;">\ALEXANDRE.C</span>
<span class="t" style="left:4766.4px;top:1380.6px;font-size:55.2px;line-height:66.2px;transform:scaleX(0.8983);color:#000;">EFETIVAÇÃO</span>
<span class="t" style="left:3780.4px;top:1481.1px;font-size:55.2px;line-height:66.2px;transform:scaleX(0.9939);color:#000;">20/06/2022</span>
<span class="t" style="left:4110.0px;top:1470.7px;font-size:55.2px;line-height:66.2px;transform:scaleX(0.8938);color:#000;">LINX-INVES</span>
<span class="t" style="left:4389.2px;top:1470.7px;font-size:55.2px;line-height:66.2px;transform:scaleX(0.8844);color:#000;">\ALEXANDRE.C</span>
<span class="t" style="left:4766.4px;top:1470.7px;font-size:55.2px;line-height:66.2px;transform:scaleX(0.8683);color:#000;">ESTORNO</span>
</section>
<nav class="grp" id="toolbars">
<svg class="ic" style="left:64px;top:352px;width:120px;height:664px" viewBox="16 88 30 166"><defs><linearGradient id="gp1" x1="0" y1="0" x2="1" y2="1"><stop offset="0" stop-color="#e9f0fb"/><stop offset=".55" stop-color="#9db3d6"/><stop offset="1" stop-color="#2f4f8c"/></linearGradient><linearGradient id="gd1" x1="0" y1="0" x2="1" y2="1"><stop offset="0" stop-color="#5cc07c"/><stop offset="1" stop-color="#189a86"/></linearGradient></defs><rect x="20.4" y="90.8" width="13.2" height="15" fill="#ededed" stroke="#bdbdbd" stroke-width="1.1"/><rect x="20.4" y="90.8" width="13.2" height="3.4" fill="#b9b9b9"/><path d="M22.8 97.39999999999999h8.4M22.8 101.39999999999999h8.4" stroke="#c6c6c6" stroke-width="1.8"/><path d="M31.2 107.9h10.2M36.3 103.2v9.2" stroke="#b4b4b4" stroke-width="1.8"/><rect x="20.4" y="118.4" width="13.2" height="15" fill="#ededed" stroke="#bdbdbd" stroke-width="1.1"/><rect x="20.4" y="118.4" width="13.2" height="3.4" fill="#b9b9b9"/><path d="M22.8 125.0h8.4M22.8 129.0h8.4" stroke="#c6c6c6" stroke-width="1.8"/><path d="M31.2 136.5h10.2" stroke="#a4a4a4" stroke-width="2"/><path d="M37.9 153.6 L37.9 150.5 L25 150.5 L32.2 157.6 L25 164.7 L37.9 164.7 L37.9 161.4" fill="none" stroke="#22b135" stroke-width="2.6" stroke-linejoin="miter" stroke-miterlimit="2"/><rect x="19.8" y="174.2" width="14" height="14" fill="#a7dcbb" stroke="url(#gd1)" stroke-width="2.2"/><path d="M23 178.4h7.6M23 181.6h6.4M23 184.8h4.2" stroke="#2fa37c" stroke-width="1.6"/><path d="M29.6 183.2 L41 189.4 L29.6 195.2 Z" fill="#bfe8cf" stroke="#23a285" stroke-width="2" stroke-linejoin="round"/><path d="M21.4 205.2h17.8l-6.6 10h6.4v2.7h-17.4v-2.7h6.4z" fill="#21c936"/><rect x="20.6" y="229.8" width="19" height="18.8" fill="url(#gp1)" stroke="#2d4b86" stroke-width="1.3"/><path d="M21.4 247.8 L21.4 243.4 L27.8 237.2 L31 240.2 L33.4 238.4 L38.8 243.6 L38.8 247.8 Z" fill="#8fa4c6" opacity=".9"/><path d="M21.4 247.8 L27.8 239.2 L33 247.8 Z" fill="#c7d3e6" opacity=".9"/><circle cx="33" cy="235" r="3" fill="#ee9448"/></svg>
<svg class="ic" style="left:3590px;top:352px;width:120px;height:664px" viewBox="16 88 30 166"><defs><linearGradient id="gp0" x1="0" y1="0" x2="1" y2="1"><stop offset="0" stop-color="#e9f0fb"/><stop offset=".55" stop-color="#9db3d6"/><stop offset="1" stop-color="#2f4f8c"/></linearGradient><linearGradient id="gd0" x1="0" y1="0" x2="1" y2="1"><stop offset="0" stop-color="#5cc07c"/><stop offset="1" stop-color="#189a86"/></linearGradient></defs><rect x="20.4" y="90.8" width="13.2" height="15" fill="#ededed" stroke="#bdbdbd" stroke-width="1.1"/><rect x="20.4" y="90.8" width="13.2" height="3.4" fill="#b9b9b9"/><path d="M22.8 97.39999999999999h8.4M22.8 101.39999999999999h8.4" stroke="#c6c6c6" stroke-width="1.8"/><path d="M31.2 107.9h10.2M36.3 103.2v9.2" stroke="#b4b4b4" stroke-width="1.8"/><rect x="20.4" y="118.4" width="13.2" height="15" fill="#ededed" stroke="#bdbdbd" stroke-width="1.1"/><rect x="20.4" y="118.4" width="13.2" height="3.4" fill="#b9b9b9"/><path d="M22.8 125.0h8.4M22.8 129.0h8.4" stroke="#c6c6c6" stroke-width="1.8"/><path d="M31.2 136.5h10.2" stroke="#a4a4a4" stroke-width="2"/><path d="M37.9 153.6 L37.9 150.5 L25 150.5 L32.2 157.6 L25 164.7 L37.9 164.7 L37.9 161.4" fill="none" stroke="#22b135" stroke-width="2.6" stroke-linejoin="miter" stroke-miterlimit="2"/><rect x="19.8" y="174.2" width="14" height="14" fill="#a7dcbb" stroke="url(#gd0)" stroke-width="2.2"/><path d="M23 178.4h7.6M23 181.6h6.4M23 184.8h4.2" stroke="#2fa37c" stroke-width="1.6"/><path d="M29.6 183.2 L41 189.4 L29.6 195.2 Z" fill="#bfe8cf" stroke="#23a285" stroke-width="2" stroke-linejoin="round"/><path d="M21.4 205.2h17.8l-6.6 10h6.4v2.7h-17.4v-2.7h6.4z" fill="#21c936"/></svg>
</nav>
<footer class="grp" id="importacao">
<div class="panel" style="left:52px;top:2268px;width:5140px;height:179px;background:#f0f0f0"></div>
<div style="left:52px;top:2268px;width:5140px;height:5px;background:#fcfcfc"></div>
<div style="left:52px;top:2268px;width:4px;height:179px;background:#fcfcfc"></div>
<div style="left:52px;top:2438px;width:5140px;height:4px;background:#a2a2a2"></div>
<div style="left:52px;top:2442px;width:5140px;height:5px;background:#676767"></div>
<div style="left:5184px;top:2268px;width:3px;height:179px;background:#a2a2a2"></div>
<div style="left:5187px;top:2268px;width:5px;height:179px;background:#676767"></div>
<svg class="ic" style="left:82px;top:2315px;width:72px;height:72px" viewBox="-9 -9 18 18"><circle r="7.5" fill="#fff" stroke="#3c3c3c" stroke-width="1.5"/></svg>
<svg class="ic" style="left:438px;top:2315px;width:72px;height:72px" viewBox="-9 -9 18 18"><circle r="7.5" fill="#fff" stroke="#3c3c3c" stroke-width="1.5"/><circle r="4" fill="#333"/></svg>
<span class="t ul1" style="left:168.0px;top:2315.2px;font-size:59.2px;line-height:71.0px;transform:scaleX(0.9738);color:#2a2a2a;">Excel</span>
<span class="t ul1" style="left:524.0px;top:2315.2px;font-size:59.2px;line-height:71.0px;transform:scaleX(0.9528);color:#2a2a2a;">CSV</span>
<span class="t" style="left:726.4px;top:2314.2px;font-size:55.2px;line-height:66.2px;transform:scaleX(0.9677);color:#000;">Arquivo</span>
<div class="field" style="left:933px;top:2299px;width:2583px;height:103px;background:#f0f0f0;border:5px solid #86a3c2"></div>
<span class="t" style="left:945.6px;top:2311.8px;font-size:55.2px;line-height:66.2px;transform:scaleX(0.8688);color:#000;">C:</span>
<span class="t" style="left:1006.8px;top:2311.8px;font-size:55.2px;line-height:66.2px;transform:scaleX(0.8329);color:#000;">\PESSOAL</span>
<span class="t" style="left:1247.6px;top:2311.8px;font-size:55.2px;line-height:66.2px;transform:scaleX(0.8322);color:#000;">\EMPRESA</span>
<span class="t" style="left:1494.0px;top:2311.8px;font-size:55.2px;line-height:66.2px;transform:scaleX(0.8275);color:#000;">\ISSUES</span>
<span class="t" style="left:1688.0px;top:2311.8px;font-size:55.2px;line-height:66.2px;transform:scaleX(0.9745);color:#000;">\HTX_01.22.030</span>
<span class="t" style="left:2088.0px;top:2311.8px;font-size:55.2px;line-height:66.2px;transform:scaleX(0.9034);color:#000;">\LINXERP-10480</span>
<span class="t" style="left:2479.2px;top:2311.8px;font-size:55.2px;line-height:66.2px;transform:scaleX(0.9225);color:#000;">\15</span>
<span class="t" style="left:2575.2px;top:2311.8px;font-size:55.2px;line-height:66.2px;transform:scaleX(0.7568);color:#000;">-</span>
<span class="t" style="left:2604.0px;top:2311.8px;font-size:55.2px;line-height:66.2px;transform:scaleX(0.8181);color:#000;">HTX</span>
<span class="t" style="left:2717.6px;top:2311.8px;font-size:55.2px;line-height:66.2px;transform:scaleX(0.9553);color:#000;">01.13.003.CSV</span>
<div class="btn" style="left:3511px;top:2294px;width:180px;height:112px;background:#e1e1e1;border:9px solid #1174cb"></div>
<span class="t" style="left:3570.4px;top:2320.6px;font-size:55.2px;line-height:66.2px;transform:scaleX(1.0435);color:#000;">...</span>
<div class="btn" style="left:3713px;top:2294px;width:253px;height:112px;background:#e1e1e1;border:4px solid #adadad"></div>
<span class="t ul1" style="left:3732.8px;top:2319.0px;font-size:55.2px;line-height:66.2px;transform:scaleX(0.9934);color:#000;">Importar</span>
<div class="btn dis" style="left:4019px;top:2300px;width:373px;height:112px;background:#cccccc;border:4px solid #bcbcbc"></div>
<span class="t" style="left:4121.2px;top:2324.2px;font-size:55.2px;line-height:66.2px;transform:scaleX(0.9429);color:#9b9ba1;text-shadow:4px 4px 0 #fff;">Validar</span>
<div class="btn dis" style="left:4403px;top:2300px;width:373px;height:112px;background:#cccccc;border:4px solid #bcbcbc"></div>
<span class="t" style="left:4492.4px;top:2324.2px;font-size:55.2px;line-height:66.2px;transform:scaleX(0.9976);color:#9b9ba1;text-shadow:4px 4px 0 #fff;">Efetivar</span>
<div class="btn dis" style="left:4788px;top:2300px;width:374px;height:112px;background:#cccccc;border:4px solid #bcbcbc"></div>
<span class="t" style="left:4866.4px;top:2324.2px;font-size:55.2px;line-height:66.2px;transform:scaleX(0.9772);color:#9b9ba1;text-shadow:4px 4px 0 #fff;">Estornar</span>
</footer>
</div>
</body></html>
